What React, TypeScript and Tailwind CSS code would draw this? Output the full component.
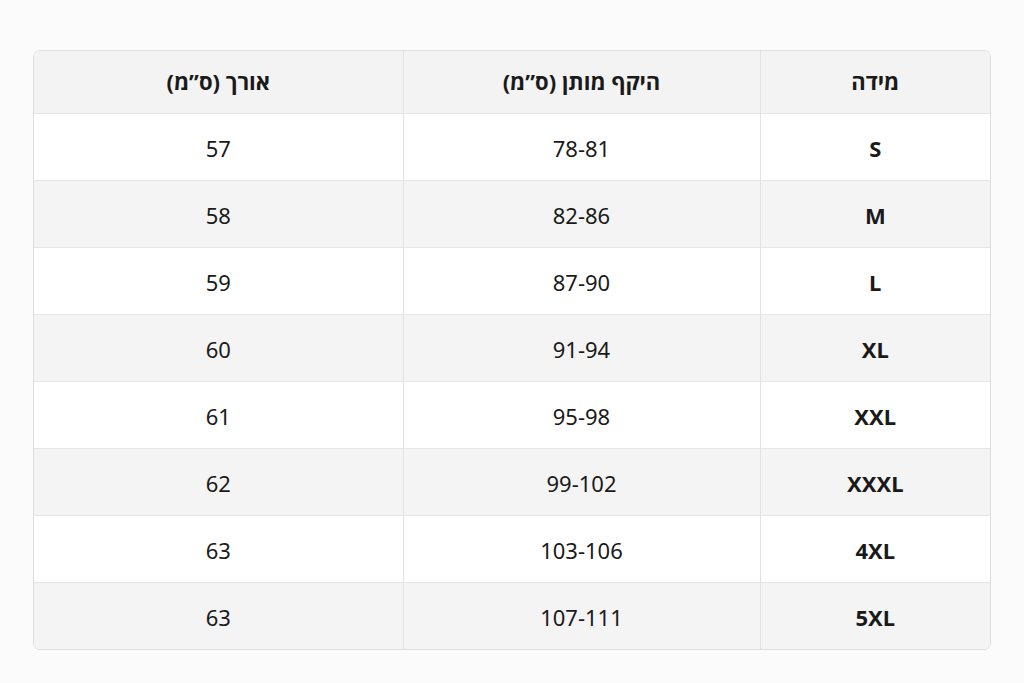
const ROWS: [string, string, string][] = [
  ["S", "78-81", "57"],
  ["M", "82-86", "58"],
  ["L", "87-90", "59"],
  ["XL", "91-94", "60"],
  ["XXL", "95-98", "61"],
  ["XXXL", "99-102", "62"],
  ["4XL", "103-106", "63"],
  ["5XL", "107-111", "63"],
];

export default function App() {
  return (
    <div
      className="min-h-[683px] w-full bg-[#fbfbfb] pt-[50px] pl-[33px] pr-[33px] text-[#1a1a1a]"
      style={{ fontFamily: '"Noto Sans", "Open Sans", "DejaVu Sans", sans-serif' }}
    >
      <div
        dir="rtl"
        className="w-[958px] overflow-hidden rounded-[7px] border border-[#dedede] bg-white"
      >
        <table className="w-full border-collapse text-center text-[22px]">
          <colgroup>
            <col className="w-[230px]" />
            <col className="w-[357px]" />
            <col />
          </colgroup>
          <thead>
            <tr className="h-[62px] bg-[#f3f3f3]">
              <th className="border-l border-[#e2e2e2] font-bold">מידה</th>
              <th className="border-l border-[#e2e2e2] font-bold">היקף מותן (ס”מ)</th>
              <th className="font-bold">אורך (ס”מ)</th>
            </tr>
          </thead>
          <tbody>
            {ROWS.map(([size, waist, length], i) => (
              <tr
                key={size}
                className={`h-[67px] border-t border-[#e6e6e6] ${i % 2 === 1 ? "bg-[#f4f4f4]" : "bg-white"}`}
              >
                <td className="border-l border-[#e2e2e2] pt-[3px] font-bold">{size}</td>
                <td className="border-l border-[#e2e2e2] pt-[3px]">{waist}</td>
                <td className="pt-[3px]">{length}</td>
              </tr>
            ))}
          </tbody>
        </table>
      </div>
    </div>
  );
}
